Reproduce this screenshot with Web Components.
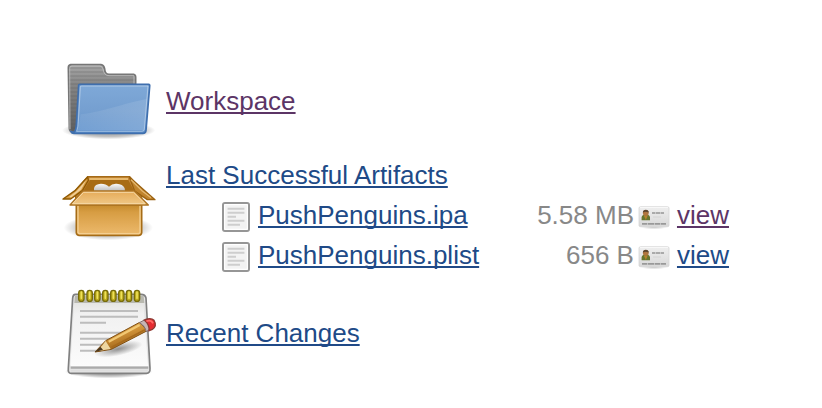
<!DOCTYPE html>
<html lang="en">
<head>
<meta charset="utf-8">
<title>Project</title>
<style>
body { margin: 0; background: #fff; font: 26px/40px "Liberation Sans", Arial, Helvetica, sans-serif; }
</style>
</head>
<body>
<project-summary></project-summary>
<script>
const define = (name, html) => {
  const template = document.createElement('template');
  template.innerHTML = html;
  customElements.define(name, class extends HTMLElement {
    constructor() {
      super();
      this.attachShadow({ mode: 'open' }).append(template.content.cloneNode(true));
    }
  });
};

define('folder-icon', `
<style>:host{display:block;width:96px;height:96px} svg{display:block;width:100%;height:100%;overflow:visible}</style>
<svg viewBox="15 -6 288 288" aria-hidden="true">
<defs>
<linearGradient id="b" x1="0" y1="0" x2="0" y2="1"><stop offset="0" stop-color="#a7a7a7"/><stop offset=".3" stop-color="#858585"/><stop offset="1" stop-color="#5d5d5d"/></linearGradient>
<linearGradient id="f" x1="0" y1="0" x2="0" y2="1"><stop offset="0" stop-color="#7fa9d8"/><stop offset=".55" stop-color="#759fd0"/><stop offset="1" stop-color="#5f92cd"/></linearGradient>
<linearGradient id="g" x1="0" y1="0" x2="1" y2="1"><stop offset="0" stop-color="#fff" stop-opacity=".02"/><stop offset="1" stop-color="#fff" stop-opacity=".2"/></linearGradient>
<radialGradient id="s"><stop offset="0" stop-opacity=".5"/><stop offset=".7" stop-opacity=".24"/><stop offset="1" stop-opacity="0"/></radialGradient>
<pattern id="p" width="12" height="12" patternUnits="userSpaceOnUse"><path d="M0 3H12" stroke="#555" stroke-opacity=".22" stroke-width="5"/></pattern>
</defs>
<ellipse cx="161" cy="226" rx="140" ry="27" fill="url(#s)"/>
<path d="M47 29H138Q147 30 149 42Q150 58 162 58H236Q242 59 242 67V232H54Q43 230 43 220L40 38Q40 30 47 29Z" fill="url(#b)" stroke="#777" stroke-width="5"/>
<path d="M47 29H138Q147 30 149 42Q150 58 162 58H236Q242 59 242 67V232H54Q43 230 43 220L40 38Q40 30 47 29Z" fill="url(#p)"/>
<path d="M45 222L44 40Q44 33 51 33H135Q142 34 144 42Q147 62 162 62H237V86" fill="none" stroke="#c3c3c3" stroke-width="3" opacity=".8"/>
<path d="M58 232Q63 225 64 210L71 90Q71 88 75 88H281Q285 88 284 94L273 226Q272 235 264 235H57Q50 235 48 230Z" fill="url(#f)" stroke="#3f6fae" stroke-width="5"/>
<path d="M65 229Q70 215 70 200L76 97Q76 93 80 93H279L268 223Q267 229 260 229Z" fill="none" stroke="#fff" stroke-opacity=".38" stroke-width="3"/>
<path d="M77 178C157 168 197 147 275 132L268 226H69Z" fill="url(#g)"/>
</svg>`);

define('box-icon', `
<style>:host{display:block;width:96px;height:96px} svg{display:block;width:100%;height:100%;overflow:visible}</style>
<svg viewBox="15 -30 288 288" aria-hidden="true">
<defs>
<linearGradient id="f" x1="0" y1="0" x2="0" y2="1"><stop offset="0" stop-color="#c48a2c"/><stop offset=".25" stop-color="#d79d43"/><stop offset="1" stop-color="#edba6d"/></linearGradient>
<linearGradient id="l" x1="0" y1="0" x2="0" y2="1"><stop offset="0" stop-color="#e5aa57"/><stop offset="1" stop-color="#f0c988"/></linearGradient>
<radialGradient id="s"><stop offset="0" stop-opacity=".5"/><stop offset=".7" stop-opacity=".2"/><stop offset="1" stop-opacity="0"/></radialGradient>
<linearGradient id="e" x1="0" y1="0" x2="0" y2="1"><stop offset="0" stop-color="#fafafa"/><stop offset="1" stop-color="#bdbdbd"/></linearGradient>
</defs>
<ellipse cx="160" cy="188" rx="134" ry="38" fill="url(#s)"/>
<path d="M98 35H224L260 75V110H62V75Z" fill="#c5883a" stroke="#a56b17" stroke-width="4"/>
<path d="M105 45H220L237 77H85Z" fill="#a86c15"/>
<path d="M103 42H219" stroke="#e7b96e" stroke-width="6"/>
<path d="M117 78V70Q119 57 138 56Q153 56 162 65Q171 55 185 56Q204 57 209 70L210 78Z" fill="url(#e)"/>
<path d="M98 36L61 76L24 102H47L82 77L100 46Z" fill="#d79b42" stroke="#8f5902" stroke-width="4" stroke-linejoin="round"/>
<path d="M94 45L65 78L42 96L49 97L78 74Z" fill="#f0cf97"/>
<path d="M223 36L239 78L277 104H300L266 74Z" fill="#c0842d" stroke="#9b6211" stroke-width="4" stroke-linejoin="round"/>
<path d="M228 44L261 77L288 98" fill="none" stroke="#e4b76e" stroke-width="4"/>
<path d="M64 119H260V203Q259 211 251 211H73Q65 211 64 203Z" fill="url(#f)" stroke="#a66c16" stroke-width="5"/>
<path d="M69 122V200Q69 206 75 206H249Q255 206 255 200V122" fill="none" stroke="#f4cf92" stroke-width="4"/>
<path d="M83 78H238L280 120H45Z" fill="url(#l)" stroke="#ac7322" stroke-width="4" stroke-linejoin="round"/>
<path d="M53 116L86 82H236L270 116Z" fill="none" stroke="#f5d8a6" stroke-width="3"/>
</svg>`);

define('notepad-icon', `
<style>:host{display:block;width:96px;height:96px} svg{display:block;width:100%;height:100%;overflow:visible}</style>
<svg viewBox="15 15 288 288" aria-hidden="true">
<defs>
<linearGradient id="p" x1="0" y1="0" x2="0" y2="1"><stop offset="0" stop-color="#dededb"/><stop offset=".25" stop-color="#f1f1f1"/><stop offset="1" stop-color="#fbfbfb"/></linearGradient>
<linearGradient id="w" x1="0" y1="0" x2=".45" y2="1"><stop offset="0" stop-color="#edbe65"/><stop offset=".5" stop-color="#cf9137"/><stop offset="1" stop-color="#985f15"/></linearGradient>
<radialGradient id="s"><stop offset="0" stop-opacity=".55"/><stop offset=".7" stop-opacity=".22"/><stop offset="1" stop-opacity="0"/></radialGradient>
<radialGradient id="h"><stop offset="0" stop-opacity=".42"/><stop offset="1" stop-opacity="0"/></radialGradient>
</defs>
<ellipse cx="161" cy="275" rx="132" ry="20" fill="url(#s)"/>
<path d="M61 43H258Q271 43 273 54L285 265Q286 280 274 280H49Q38 280 40 265L53 54Q54 43 61 43Z" fill="#e4e4e4" stroke="#808080" stroke-width="5"/>
<path d="M63 50H264L279 256H46L58 64Q58 50 63 50Z" fill="url(#p)"/>
<path d="M60 47H266L268 69H58Z" fill="#aaa99e" opacity=".75"/>
<path d="M47 257H279" stroke="#fff" stroke-width="3"/><path d="M47 263H280" stroke="#aaa" stroke-width="7"/><path d="M48 272H278" stroke="#dedede" stroke-width="5"/>
<path d="M75 93H249M75 110H249M75 128H153M75 158H229M75 176H198M75 194H165M75 212H137" stroke="#bdbdbd" stroke-width="6"/>
<g fill="#bba91d" stroke="#776c0b" stroke-width="4"><rect x="71" y="31" width="16" height="33" rx="8"/><rect x="96" y="31" width="16" height="33" rx="8"/><rect x="119" y="31" width="16" height="33" rx="8"/><rect x="143" y="31" width="16" height="33" rx="8"/><rect x="167" y="31" width="16" height="33" rx="8"/><rect x="191" y="31" width="16" height="33" rx="8"/><rect x="214" y="31" width="16" height="33" rx="8"/><rect x="238" y="31" width="16" height="33" rx="8"/></g>
<path d="M79 36V55M104 36V55M127 36V55M151 36V55M175 36V55M199 36V55M222 36V55M246 36V55" stroke="#ede15a" stroke-width="5" stroke-linecap="round"/>
<ellipse cx="190" cy="207" rx="74" ry="20" fill="url(#h)" transform="rotate(-12 190 207)"/>
<path d="M120 216L152 182L254 127L277 152L169 208Z" fill="url(#w)" stroke="#805014" stroke-width="3" stroke-linejoin="round"/>
<path d="M152 183L167 207L124 214L141 197Z" fill="#edd6a1"/><path d="M119 217L136 200L144 209Z" fill="#4b3923"/>
<path d="M161 185L254 135" stroke="#f2c873" stroke-width="7"/><path d="M170 202L270 149" stroke="#a76a1c" stroke-width="5"/>
<path d="M253 128L272 118Q294 132 291 143L274 155Q270 137 253 128Z" fill="#c5b5b4" stroke="#826e6d" stroke-width="3"/>
<path d="M268 120Q288 112 297 121Q307 138 292 148L282 152Q284 134 268 120Z" fill="#e72c32" stroke="#8f3831" stroke-width="4"/>
<path d="M274 124Q288 118 294 130" fill="none" stroke="#ff6c66" stroke-width="5"/>
</svg>`);

define('document-icon', `
<style>:host{display:block;width:32px;height:32px} svg{display:block;width:100%;height:100%}</style>
<svg viewBox="-2 0 32 32" aria-hidden="true">
<rect x="-1" y="1" width="26" height="28" rx="2" transform="translate(2 1)" fill="#f3f3f3" stroke="#969696" stroke-width="2"/>
<rect x="2.6" y="3.6" width="22.8" height="24.8" rx=".5" fill="none" stroke="#fff" stroke-width="1.2"/>
<path d="M5.6 7.7H22.4M5.6 11.7H22.4M5.6 15.7H14M5.6 19.7H22.4M5.6 23.7H18" stroke="#cecece" stroke-width="2"/>
</svg>`);

define('card-icon', `
<style>:host{display:block;width:32px;height:32px} svg{display:block;width:100%;height:100%}</style>
<svg viewBox="0 0 32 32" aria-hidden="true">
<defs><linearGradient id="c" x1="0" y1="0" x2="0" y2="1"><stop offset="0" stop-color="#efefef"/><stop offset="1" stop-color="#d8d8d8"/></linearGradient><radialGradient id="s"><stop offset="0" stop-opacity=".25"/><stop offset="1" stop-opacity="0"/></radialGradient></defs>
<ellipse cx="16" cy="25.8" rx="14" ry="2.7" fill="url(#s)"/>
<rect x="1" y="5.7" width="30" height="20" rx="1.5" fill="url(#c)" stroke="#d5d5d5" stroke-width=".8"/>
<path d="M2 6.5H30" stroke="#f8f8f8"/>
<path d="M3.6 19.2V16Q4.6 13.2 7.8 13.2Q11 13.2 12 16V19.2Z" fill="#66752f"/>
<path d="M5.8 14.5L7.8 19L9.8 14.5Z" fill="#b5822c"/>
<circle cx="7.8" cy="11.9" r="2.9" fill="#b0763f"/><path d="M4.8 11.6Q5 8.8 7.8 8.8T10.8 11.6L7.8 10.7Z" fill="#5d4630"/>
<path d="M14 12H17.5M18 12H22M22.5 12H26" stroke="#aaa" stroke-width="1.8"/><path d="M15 16H23" stroke="#d4d4d4"/>
<path d="M4 22.8H9M9.6 22.8H16M16.6 22.8H22M22.6 22.8H28" stroke="#999" stroke-width="1.8"/>
</svg>`);

const linkStyle = `a{color:#204a87;text-decoration:underline;text-decoration-thickness:2px;text-underline-offset:2px;text-decoration-skip-ink:none}
a.visited{color:#5c3566}`;

define('summary-row', `
<style>
:host{display:flex;align-items:center;gap:10px}
:host([top]){align-items:flex-start}
</style>
<slot name="icon"></slot><div><slot></slot></div>`);

define('artifact-list', `
<style>
:host{display:block;margin:0 0 4px 54px}
table{border-collapse:collapse}
td{box-sizing:border-box;padding:0;height:40px;white-space:nowrap}
.file{padding-top:4px}
.name{padding-left:6px}
.size{padding-left:58px;text-align:right;color:#888}
.card{padding:4px 7px 0 4px}
${linkStyle}
</style>
<table aria-label="Artifacts">
<tr><td class="file"><document-icon></document-icon></td><td class="name"><a href="#ipa">PushPenguins.ipa</a></td><td class="size">5.58 MB</td><td class="card"><card-icon></card-icon></td><td><a class="visited" href="#view-ipa">view</a></td></tr>
<tr><td class="file"><document-icon></document-icon></td><td class="name"><a href="#plist">PushPenguins.plist</a></td><td class="size">656 B</td><td class="card"><card-icon></card-icon></td><td><a href="#view-plist">view</a></td></tr>
</table>`);

define('project-summary', `
<style>
:host{display:flex;flex-direction:column;gap:6px;padding:53px 60px 24px}
${linkStyle}
</style>
<summary-row><folder-icon slot="icon"></folder-icon><a class="visited" href="#workspace">Workspace</a></summary-row>
<summary-row top><box-icon slot="icon"></box-icon><a href="#artifacts">Last Successful Artifacts</a><artifact-list></artifact-list></summary-row>
<summary-row><notepad-icon slot="icon"></notepad-icon><a href="#changes">Recent Changes</a></summary-row>`);
</script>
</body>
</html>
